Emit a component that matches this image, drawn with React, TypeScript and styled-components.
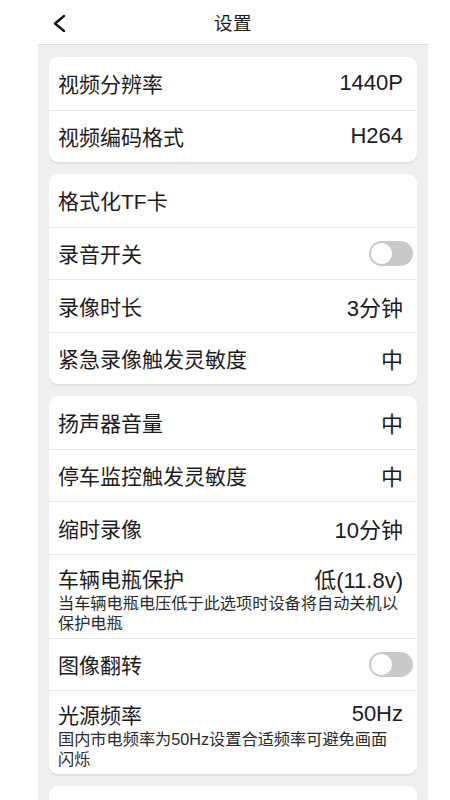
import * as React from 'react'
import styled, { createGlobalStyle } from 'styled-components'

const GlobalStyle = createGlobalStyle`
  html, body {
    margin: 0;
    padding: 0;
    background: #ffffff;
  }
  body {
    font-family: 'Liberation Sans', 'Noto Sans CJK SC', sans-serif;
    color: #1c1c1c;
  }
`

type Row = {
  label: string
  value?: string
  toggle?: boolean
  note?: string
}

const groups: Row[][] = [
  [
    { label: '视频分辨率', value: '1440P' },
    { label: '视频编码格式', value: 'H264' }
  ],
  [
    { label: '格式化TF卡' },
    { label: '录音开关', toggle: true },
    { label: '录像时长', value: '3分钟' },
    { label: '紧急录像触发灵敏度', value: '中' }
  ],
  [
    { label: '扬声器音量', value: '中' },
    { label: '停车监控触发灵敏度', value: '中' },
    { label: '缩时录像', value: '10分钟' },
    {
      label: '车辆电瓶保护',
      value: '低(11.8v)',
      note: '当车辆电瓶电压低于此选项时设备将自动关机以保护电瓶'
    },
    { label: '图像翻转', toggle: true },
    {
      label: '光源频率',
      value: '50Hz',
      note: '国内市电频率为50Hz设置合适频率可避免画面闪烁'
    }
  ],
  // next group sits below the fold
  []
]

const Page = styled.div`
  width: 390px;
  min-height: 100vh;
  margin-left: 38px;
  background: #efefef;
`

const Header = styled.header`
  position: relative;
  height: 45px;
  display: flex;
  align-items: center;
  justify-content: center;
  background: #ffffff;
  border-bottom: 1px solid #dcdcdc;
  box-sizing: border-box;
`

const BackButton = styled.button`
  position: absolute;
  left: 10px;
  top: 11px;
  width: 24px;
  height: 24px;
  padding: 0;
  border: 0;
  background: none;
  display: flex;
  align-items: center;
  justify-content: center;
`

const Title = styled.h1`
  margin: 0;
  font-size: 18.5px;
  font-weight: 400;
  color: #1c1c1c;
  letter-spacing: 0.5px;
`

const Content = styled.main`
  display: flex;
  flex-direction: column;
  gap: 12px;
  padding: 12px 11px 0;
`

const Card = styled.section`
  min-height: 52px;
  background: #ffffff;
  border-radius: 9px;
  box-shadow: 0 1.5px 1px rgba(0, 0, 0, 0.06);
  overflow: hidden;
`

const Item = styled.div<{ $note: boolean }>`
  display: flex;
  flex-direction: column;
  justify-content: center;
  min-height: 52.5px;
  box-sizing: border-box;
  padding: ${({ $note }) => ($note ? '10px 14px 5px 9px' : '0 14px 0 9px')};

  & + & {
    border-top: 1px solid #e8e8e8;
  }
`

const Line = styled.div`
  display: flex;
  align-items: center;
  justify-content: space-between;
  height: 26px;
`

const Label = styled.span`
  font-size: 21px;
  color: #1c1c1c;
`

const Value = styled.span`
  font-size: 22px;
  color: #1c1c1c;
`

const Note = styled.p`
  margin: 2px 0 0;
  padding-right: 4px;
  font-size: 16.2px;
  line-height: 20px;
  color: #2a2a2a;
`

const Switch = styled.span`
  position: relative;
  width: 44px;
  height: 25px;
  margin-right: -10px;
  border-radius: 13px;
  background: #c9c9c9;

  &::after {
    content: '';
    position: absolute;
    left: 2px;
    top: 2px;
    width: 21px;
    height: 21px;
    border-radius: 50%;
    background: #ffffff;
  }
`

const App: React.FC = () => {
  return (
    <>
      <GlobalStyle />
      <Page>
        <Header>
          <BackButton aria-label="返回">
            <svg width="14" height="18" viewBox="0 0 14 18">
              <polyline
                points="11,2 2,9.5 11,17"
                fill="none"
                stroke="#111"
                strokeWidth="2.3"
                strokeLinecap="round"
                strokeLinejoin="round"
              />
            </svg>
          </BackButton>
          <Title>设置</Title>
        </Header>

        <Content>
          {groups.map((group, gi) => (
            <Card key={gi}>
              {group.map(row => (
                <Item key={row.label} $note={!!row.note}>
                  <Line>
                    <Label>{row.label}</Label>
                    {row.value && <Value>{row.value}</Value>}
                    {row.toggle && <Switch />}
                  </Line>
                  {row.note && <Note>{row.note}</Note>}
                </Item>
              ))}
            </Card>
          ))}
        </Content>
      </Page>
    </>
  )
}

export default App
